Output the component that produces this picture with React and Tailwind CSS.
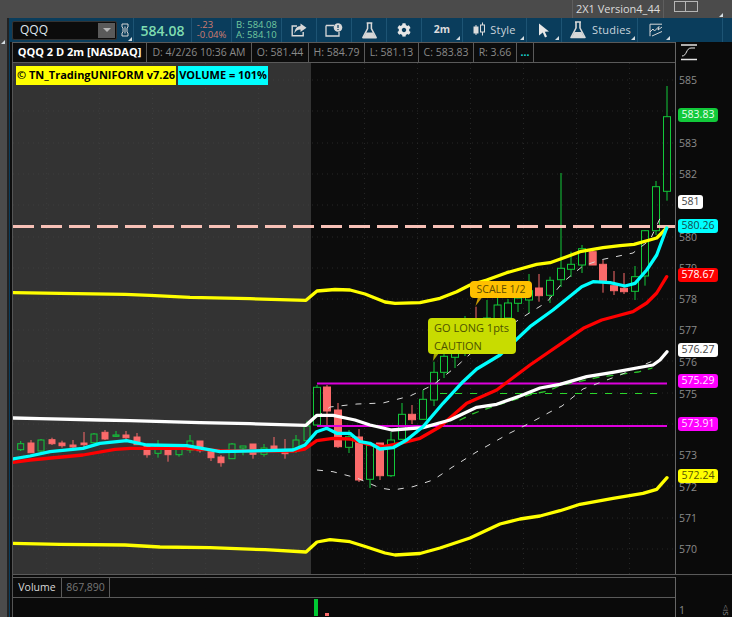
import React from 'react';
import { FaCog } from 'react-icons/fa';

// x, wick top, body top, body bottom, wick bottom, colour
const candles = [
  [20.7, 441, 443.7, 449.7, 451, 'g'], [31, 440, 443, 452.7, 453, 'r'], [41, 439, 440, 451, 452, 'g'],
  [52, 437.7, 439.7, 443.7, 445, 'r'], [62, 440.7, 443, 445.7, 447.7, 'r'], [73, 440, 445, 447, 448.7, 'r'],
  [84, 432, 443, 444.7, 449, 'r'], [94, 433, 434, 442.7, 443.5, 'g'], [105, 430, 432.3, 439, 440, 'r'],
  [116, 431, 435, 436.3, 437, 'g'], [126, 431, 435, 437.7, 440, 'r'], [137, 433, 437, 444.7, 445, 'r'],
  [147, 446, 446, 454.7, 457.7, 'r'], [158, 440, 445, 453.3, 457.7, 'g'], [168, 444, 447.3, 454.7, 461.7, 'r'],
  [179, 445, 446, 454.7, 456.7, 'g'], [190, 435, 441, 450, 453, 'g'], [200, 441, 441, 450.7, 452.7, 'r'],
  [211, 448.7, 450.7, 457.7, 461, 'r'], [221, 455, 457, 462.7, 466.7, 'r'], [232, 443, 444, 458.7, 459, 'g'],
  [243, 446, 446, 448, 455.3, 'g'], [253, 444, 444, 454.3, 458.7, 'r'], [264, 444, 448, 454.3, 456.7, 'g'],
  [274, 437, 446, 449.3, 450, 'r'], [285, 439, 451, 453.7, 458.7, 'r'], [296, 435, 440, 451.3, 453, 'g'],
  [307, 420.7, 426, 440.7, 441.7, 'g'], [317, 385, 387.3, 425, 426, 'g'], [327, 385, 387, 411, 425, 'r'],
  [338, 403, 410, 446.7, 448, 'r'], [349, 430, 436.7, 447.3, 453, 'g'], [359, 429, 437, 480, 482, 'r'],
  [370, 445, 445, 479.3, 488, 'g'], [380, 443, 443, 475.7, 480, 'r'], [391, 432, 440, 475.7, 477, 'g'],
  [402, 403, 414.3, 439.3, 440, 'g'], [412, 405, 414.3, 419.7, 424, 'r'], [423, 390, 399.3, 419.3, 420, 'g'],
  [434, 361.7, 372.3, 400, 406, 'g'], [444, 353, 356.3, 372.3, 378, 'g'], [455, 342, 347, 357.3, 368, 'g'],
  [465, 316, 338, 350, 356, 'g'], [476, 306.7, 325, 340, 345, 'r'], [487, 300, 318, 335, 340, 'g'],
  [497.6, 298, 305, 320, 325, 'g'], [508, 299, 303, 318, 322, 'g'], [518, 290, 298, 303.3, 312, 'g'],
  [529, 274, 290.7, 300, 313, 'g'], [539, 274, 288, 295.7, 301.7, 'r'], [550, 276.7, 280.3, 295.3, 303, 'g'],
  [561, 173, 268.3, 279.7, 287, 'g'], [571, 251.7, 264.3, 269.3, 277, 'g'], [582, 245, 248.7, 265, 273, 'g'],
  [592.7, 251, 251.7, 265, 265, 'r'], [603, 260, 264.3, 281.7, 292.7, 'r'], [614, 271, 285.7, 290.7, 295, 'r'],
  [624, 273, 288.3, 291.7, 294, 'r'], [635, 266, 276.7, 291.3, 300, 'g'], [645, 230, 230.7, 276, 285.7, 'g'],
  [656, 181, 186.7, 230.7, 235, 'g'], [667, 86, 116.7, 191.3, 200.7, 'g'],
];

const lines = {
  yellowTop: '13,292.7 60,293.3 125,294.3 150,295.3 190,297.3 250,298.7 306,300.3 317,291 335,289.5 350,290 365,294 385,302 395,303.3 420,302.7 440,298.3 456.7,291.7 470,285 486.7,280 506.7,272.7 520,269 536.7,264.3 550,262.7 566.7,256.7 580,251.7 603,247.7 620,245.7 634,244.3 656.7,238 666.7,228',
  yellowLow: '13,543.3 60,544.3 125,545 160,547 210,547.7 265,549.7 306,552 317,542 330,539.7 350,541.7 366,546.7 385,553 395,555 420,553.5 440,548 470,538 500,524 520,519 540,516 560,510.7 580,504.3 613,498.3 643,493.3 656.7,489.3 667,477.7',
  white: '13,418 40,418.7 100,420 130,420.7 200,422.7 250,423.7 306,425.3 317,415.3 333,415.3 355,420 370,425 391.7,430 423,427.7 450,420 476.7,407.3 496.7,404.3 520,396 540,388 560,384.3 586.7,376.7 613,372.3 653,365 660,360 667,351.7',
  cyan: '13,459 30,456 50,451.7 83,448.3 100,443.3 126.7,440.7 146.7,445 186.7,445.7 220,451.7 293,450 305,445 316.7,431.7 326.7,428.3 336.7,433.3 350,433.3 360,441.7 370,443.3 380,449 393,447.7 406.7,440 423,426.7 443,403.3 463,381.7 476.7,369 500,355 530,326.7 553,310 581.7,286.7 593,281.7 610,282.7 625,286 635,283.3 646.7,270 656.7,255 666.7,228',
  red: '13,462.3 30,460 83,455 115,449.3 130,448.3 187,448.3 220,450.7 293,451 305,449 316.7,440.7 333,438.3 350,439 366.7,444 383,446.7 400,443.3 420,438.3 440,426.7 466.7,403.3 496.7,390 530,365 583.3,328.3 601.7,320 616.7,316 633,311.7 646.7,303 656.7,293 666.7,276.7',
  dashHigh: '317,417 330,407 357,404 383,403 410,396 433,385 457,366 480,345 500,332 523,317 547,302 563,282 583,266 600,260 633,253 650,240 663,212',
  dashLow: '317,470 333,471.7 357,478 380,488 393,490 413,486.7 433,480 453,466.7 477,451.7 510,433 530,423 550,412 562,406 583,389 620,375 655,360',
  dashGreen: '460,420 472,414 483,410 507,402 533,394 548,391 560,385.7 600,377 638,372 652,368',
};

const gridX = [46.7, 99.6, 152.5, 205.6, 258.6, 364.5, 417.5, 470.5, 523.5, 576.5, 629.5];
const gridY = [80, 111, 143, 174, 205, 237, 268, 299, 330, 361, 393, 424, 455, 486, 518, 549];

const axisTicks = [
  ['585', 81], ['583', 144], ['582', 175], ['580', 238], ['579', 269], ['578', 300], ['577', 331], ['576', 363],
  ['575', 395], ['573', 456], ['572', 488], ['571', 519], ['570', 550],
];

function Corner({ className = 'right-[2px] bottom-[2px]' }) {
  return <span className={`absolute ${className} h-0 w-0 border-b-[4px] border-l-[4px] border-b-[#d5dde2] border-l-transparent`} />;
}

function ToolCell({ w, children }) {
  return (
    <div className={`relative flex h-full shrink-0 items-center justify-center border-r border-[#1d5474] ${w}`}>
      {children}
    </div>
  );
}

function Flask({ size = 20 }) {
  return (
    <svg width={size} height={size} viewBox="0 0 20 20" fill="none">
      <path d="M7 2h6M8 2v6L3 17.5h14L12 8V2" stroke="#d8d8d8" strokeWidth="1.6" strokeLinejoin="round" />
      <path d="M6.5 12h7l3 5.5h-13z" fill="#d8d8d8" />
    </svg>
  );
}

function Toolbar() {
  return (
    <div className="flex h-[24px] items-center bg-[#0a3d5c] pl-[3px]">
      <div className="flex h-[19px] w-[105px] shrink-0 items-center justify-between rounded-[2px] border border-[#333] bg-[#0c0c0c] pl-[7px] pr-[1px] text-[12px] text-[#dfe6ee]">
        QQQ
        <span className="flex h-[15px] w-[17px] items-center justify-center bg-[#5a5a5a]">
          <span className="h-0 w-0 border-x-[4px] border-t-[4px] border-x-transparent border-t-[#b5b5b5]" />
        </span>
      </div>
      <div className="relative flex h-full w-[17px] shrink-0 items-center justify-center border-r border-[#1d5474]">
        <svg width="8" height="14" viewBox="0 0 8 14" fill="none" stroke="#d5d5d5" strokeWidth="1">
          <path d="M1 1h6v3L6 5v4l1 1v3H1v-3l1-1V5L1 4z" />
          <path d="M4 3.5v7" />
        </svg>
        <Corner className="right-[1px] bottom-[1px]" />
      </div>
      <ToolCell w="w-[58px]">
        <span className="text-[14px] font-semibold text-[#7fdcb0]">584.08</span>
      </ToolCell>
      <ToolCell w="w-[40px]">
        <span className="flex flex-col text-[9.5px] leading-[10px] text-[#cf7c70]">
          <span>-.23</span>
          <span>-0.04%</span>
        </span>
      </ToolCell>
      <ToolCell w="w-[50px]">
        <span className="flex flex-col text-[9.5px] leading-[10px] text-[#72c9a0]">
          <span>B: 584.08</span>
          <span>A: 584.10</span>
        </span>
      </ToolCell>
      <ToolCell w="w-[35px]">
        <svg width="16" height="14" viewBox="0 0 16 14" fill="none">
          <path d="M6 3H1.2v9.8h11V9" stroke="#d8d8d8" strokeWidth="1.4" />
          <path d="M9.5 0.5L15.5 4.7 9.5 9V6.5C6.5 6.5 4.5 8 3.5 10.5 3.5 6 6 3 9.5 3z" fill="#d8d8d8" />
        </svg>
      </ToolCell>
      <ToolCell w="w-[35px]">
        <svg width="18" height="14" viewBox="0 0 18 14" fill="none">
          <path d="M1 2.5h8M1 2.5V13h13V9" stroke="#d8d8d8" strokeWidth="1.3" />
          <circle cx="13" cy="4.5" r="4.3" fill="#d8d8d8" />
          <path d="M13 2v3M13 6v1" stroke="#0a3d5c" strokeWidth="1.2" />
        </svg>
      </ToolCell>
      <ToolCell w="w-[35px]">
        <Flask size={19} />
      </ToolCell>
      <ToolCell w="w-[35px]">
        <FaCog size={14} color="#e6e6e6" />
      </ToolCell>
      <ToolCell w="w-[41px]">
        <span className="text-[10.5px] font-bold text-[#dcdcdc]">2m</span>
        <Corner />
      </ToolCell>
      <ToolCell w="w-[64px]">
        <svg width="12" height="16" viewBox="0 0 12 16" className="mr-[5px]" fill="none" stroke="#dcdcdc">
          <path d="M3 3v10M9.5 0.5v13" />
          <rect x="1" y="5" width="4" height="6" fill="#dcdcdc" />
          <rect x="7.5" y="3" width="4" height="7" fill="#0a3d5c" />
        </svg>
        <span className="text-[11px] tracking-[0.2px] text-[#c9d4db]">Style</span>
        <Corner />
      </ToolCell>
      <ToolCell w="w-[35px]">
        <svg width="12" height="15" viewBox="0 0 12 15">
          <path d="M1 0.5L11 8.5 6.8 8.8 9 13.6 7 14.5 4.8 9.6 1 12.5z" fill="#e8e8e8" />
        </svg>
        <Corner />
      </ToolCell>
      <ToolCell w="w-[76px]">
        <span className="mr-[4px]"><Flask size={20} /></span>
        <span className="text-[11px] tracking-[0.2px] text-[#c9d4db]">Studies</span>
        <Corner />
      </ToolCell>
      <ToolCell w="w-[85px]">
        <span className="mr-[48px]">
          <svg width="14" height="14" viewBox="0 0 14 14" fill="none" stroke="#d8d8d8" strokeWidth="1">
            <path d="M1 1.2h12M1 1.2v12" />
            <path d="M1 9l3-3 1.5 2L10 3.5 9 7l4-3M3 13l10-4.5" />
          </svg>
        </span>
        <Corner className="right-[52px] bottom-[2px]" />
      </ToolCell>
    </div>
  );
}

const quoteCells = [
  ['D: 4/2/26 10:36 AM', 'w-[105px]'],
  ['O: 581.44', 'w-[57px]'],
  ['H: 584.79', 'w-[56px]'],
  ['L: 581.13', 'w-[54px]'],
  ['C: 583.83', 'w-[55px]'],
  ['R: 3.66', 'w-[43px]'],
];

function QuoteRow() {
  return (
    <div className="flex h-[21px] shrink-0 border-y border-[#5a5a5a] bg-[#0c0c0c] text-[10.5px] text-[#8a8a8a]">
      <div className="flex w-[134px] shrink-0 items-center justify-center border-r border-[#5a5a5a] text-[11px] font-bold text-white">
        QQQ 2 D 2m [NASDAQ]
      </div>
      {quoteCells.map(([label, w]) => (
        <div key={label} className={`flex shrink-0 items-center justify-center border-r border-[#5a5a5a] ${w}`}>
          {label}
        </div>
      ))}
      <div className="flex w-[17px] shrink-0 items-center justify-center border-r border-[#5a5a5a] font-bold text-[#19d9d9]">...</div>
    </div>
  );
}

function Candle({ c }) {
  const [x, hi, top, bottom, lo, kind] = c;
  const color = kind === 'g' ? '#12c93a' : '#fb6a6a';
  const half = x > 311 ? 3.5 : 3;
  return (
    <g stroke={color} strokeWidth="1">
      <line x1={x} x2={x} y1={hi} y2={top} />
      <line x1={x} x2={x} y1={bottom} y2={lo} />
      <rect
        x={x - half}
        y={top}
        width={half * 2}
        height={Math.max(bottom - top, 1)}
        fill={kind === 'g' ? 'none' : color}
      />
    </g>
  );
}

function PriceChart() {
  return (
    <svg viewBox="13 63 662 511" className="absolute inset-0 h-full w-full">
      <rect x="13" y="63" width="298" height="511" fill="#333333" />
      {gridX.map((x) => (
        <line key={x} x1={x} x2={x} y1="63" y2="574" stroke={x < 311 ? '#3e3e3e' : '#262626'} strokeDasharray="1 4" />
      ))}
      {gridY.map((y) => (
        <g key={y} strokeDasharray="1 4">
          <line x1="13" x2="310" y1={y} y2={y} stroke="#3e3e3e" />
          <line x1="312" x2="675" y1={y} y2={y} stroke="#262626" />
        </g>
      ))}
      {candles.map((c) => (
        <Candle key={c[0]} c={c} />
      ))}
      <line x1="13" x2="675" y1="226.5" y2="226.5" stroke="#f7c0b6" strokeWidth="3" strokeDasharray="21 7" />
      <line x1="440" x2="660" y1="393.5" y2="393.5" stroke="#2bd62b" strokeDasharray="7 8" />
      <line x1="317" x2="667" y1="383.5" y2="383.5" stroke="#dd00dd" strokeWidth="2" />
      <line x1="317" x2="667" y1="426" y2="426" stroke="#dd00dd" strokeWidth="2" />
      <g fill="none" strokeLinejoin="round" strokeLinecap="round">
        <polyline points={lines.dashGreen} stroke="#2bc72b" strokeWidth="1.3" strokeDasharray="6 8" />
        <polyline points={lines.dashHigh} stroke="#d8d8d8" strokeWidth="1" strokeLinecap="butt" strokeDasharray="6 8" />
        <polyline points={lines.dashLow} stroke="#d8d8d8" strokeWidth="1" strokeLinecap="butt" strokeDasharray="6 8" />
        <polyline points={lines.yellowTop} stroke="#ffff00" strokeWidth="3.3" />
        <polyline points={lines.yellowLow} stroke="#ffff00" strokeWidth="3.3" />
        <polyline points={lines.red} stroke="#ff0000" strokeWidth="3.3" />
        <polyline points={lines.white} stroke="#ffffff" strokeWidth="3.3" />
        <polyline points={lines.cyan} stroke="#00ffff" strokeWidth="3.3" />
      </g>
      <path d="M478 297l-2.5 9 7-9z" fill="#c99a00" />
      <path d="M434 353l-1 8 6-8z" fill="#a8a800" />
    </svg>
  );
}

function Badge({ top, width = 40, className, children }) {
  return (
    <span style={{ top, width }} className={`absolute left-[2px] flex h-[14px] items-center justify-center rounded-[3px] text-[10.5px] ${className}`}>
      {children}
    </span>
  );
}

function PriceAxis() {
  return (
    <div className="relative w-[57px] shrink-0 border-l border-[#666] bg-[#0a0a0a] text-[10.5px] text-[#8a8a8a]">
      <svg width="16" height="17" viewBox="0 0 16 17" fill="none" className="absolute left-[5px] top-[2px]" stroke="#e4e4e4">
        <path d="M0 1h16M0 15.5h16" strokeWidth="1.5" />
        <path d="M1 12c5 0 4-8 9-8h4" strokeWidth="1" />
      </svg>
      {axisTicks.map(([label, y]) => (
        <span key={label} style={{ top: y - 43 - 8 }} className="absolute left-[3px] leading-[16px]">
          {label}
        </span>
      ))}
      <Badge top={66} className="bg-[#12c93a] text-[#eafff0]">583.83</Badge>
      <Badge top={153} width={25} className="bg-white text-[#444]">581</Badge>
      <Badge top={177} className="bg-[#00ffff] text-[#164a4a]">580.26</Badge>
      <Badge top={226} className="bg-[#ff0000] text-white">578.67</Badge>
      <Badge top={301} className="bg-white text-[#444]">576.27</Badge>
      <Badge top={332} className="bg-[#ff00ff] text-[#ffe6ff]">575.29</Badge>
      <Badge top={375} className="bg-[#ff00ff] text-[#ffe6ff]">573.91</Badge>
      <Badge top={427} className="bg-[#ffff00] text-[#555500]">572.24</Badge>
    </div>
  );
}

function VolumePane() {
  return (
    <div className="flex h-[40px] shrink-0 bg-[#0a0a0a]">
      <div className="relative w-[663px] shrink-0 overflow-hidden border-r border-[#666]">
        <div className="flex h-[21px] border-y border-[#5a5a5a] bg-[#0c0c0c] text-[10.5px]">
          <div className="flex w-[49px] items-center justify-center border-r border-[#5a5a5a] text-[#d8d8d8]">Volume</div>
          <div className="flex w-[48px] items-center justify-center border-r border-[#5a5a5a] text-[#777]">867,890</div>
        </div>
        <span className="absolute left-[301px] top-[22px] h-[17px] w-[4px] bg-[#00c932]" />
        <span className="absolute left-[312px] top-[36px] h-[3px] w-[4px] bg-[#fb6a6a]" />
      </div>
      <div className="relative flex-1 text-[10.5px] text-[#8a8a8a]">
        <span className="absolute left-[3px] top-[26px]">1</span>
        <span className="absolute right-[1px] top-[27px] rotate-90 text-[8px]">&lt;IS</span>
      </div>
    </div>
  );
}

export default function App() {
  return (
    <div className="flex h-[617px] w-[732px] flex-col overflow-hidden bg-[#4b4b4b] font-['Open_Sans',sans-serif]">
      {/* window title strip */}
      <div className="flex h-[18px] shrink-0 justify-end pr-[8px]">
        <div className="flex h-full items-center border-x border-[#5e5e5e] px-[3px] text-[11px] text-[#dcdcdc]">2X1 Version4_44</div>
        <div className="relative flex h-full w-[60px] items-start pl-[10px] pt-[1px]">
          <span className="h-[11px] w-[12px] border border-[#b5b5b5]" />
          <span className="h-[11px] w-[12px] border border-l-0 border-[#b5b5b5]" />
          <Corner className="right-[1px] bottom-[1px]" />
        </div>
      </div>

      <div className="flex min-h-0 flex-1">
        <div className="relative flex w-[9px] shrink-0">
          <div className="w-[7px] bg-[#4b4b4b]" />
          <div className="w-[2px] bg-[#222]" />
          <Corner className="left-[1px] top-[22px]" />
        </div>
        <div className="flex min-w-0 flex-1 flex-col">
          <Toolbar />
          <div className="flex min-h-0 flex-1 border-l border-[#0a3d5c] bg-[#0c0c0c] pl-[2px]">
            <div className="flex min-w-0 flex-1 flex-col border-l border-[#555]">
              <div className="flex min-h-0 flex-1">
                <div className="flex w-[662px] shrink-0 flex-col">
                  <QuoteRow />
                  <div className="relative flex-1">
                    <PriceChart />
                    <div className="absolute left-[3px] top-[3px] flex gap-[2px] text-[11px] font-bold text-black">
                      <span className="flex h-[19px] w-[160px] items-center justify-center bg-[#ffff00]">© TN_TradingUNIFORM v7.26</span>
                      <span className="flex h-[19px] w-[90px] items-center justify-center bg-[#00ffff]">VOLUME = 101%</span>
                    </div>
                    <div className="absolute left-[457px] top-[218px] flex h-[17px] w-[62px] items-center justify-center rounded-[4px] bg-[#ffc000] text-[10.5px] text-[#5f4d00]">
                      SCALE 1/2
                    </div>
                    <div className="absolute left-[415px] top-[255px] flex h-[36px] w-[88px] flex-col justify-center rounded-[4px] bg-[#c8dc00] pl-[6px] pt-[2px] text-[11px] leading-[18px] text-[#4d5300]">
                      <span>GO LONG 1pts</span>
                      <span>CAUTION</span>
                    </div>
                  </div>
                </div>
                <PriceAxis />
              </div>
              <div className="h-[3px] shrink-0 border-t border-[#5a5a5a]" />
              <VolumePane />
            </div>
          </div>
        </div>
      </div>
    </div>
  );
}
